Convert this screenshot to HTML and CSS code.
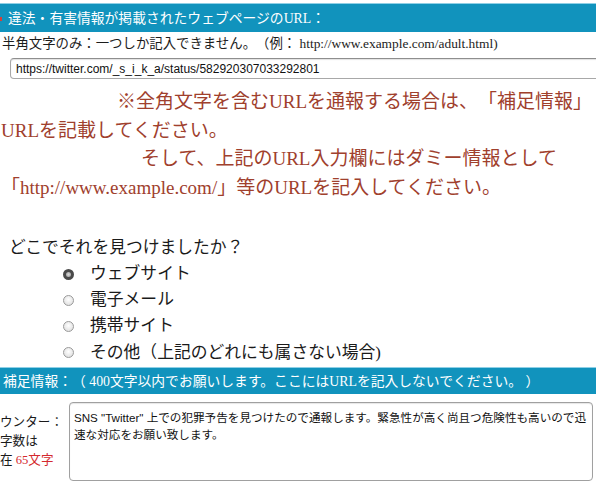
FILE: index.html
```html
<!DOCTYPE html>
<html lang="ja">
<head>
<meta charset="utf-8">
<title>通報フォーム</title>
<link rel="stylesheet" href="styles.css">
</head>
<body>
<div class="page">
  <div class="bar bar-top"><span class="mark"></span>違法・有害情報が掲載されたウェブページのURL：</div>
  <div class="hint">半角文字のみ：一つしか記入できません。（例： http://www.example.com/adult.html)</div>
  <div class="url-row"><input class="url" type="text" value="https://twitter.com/_s_i_k_a/status/582920307033292801"></div>
  <div class="notice">
    <p class="indent1">※全角文字を含むURLを通報する場合は、「補足情報」</p>
    <p>URLを記載してください。</p>
    <p class="indent2">そして、上記のURL入力欄にはダミー情報として</p>
    <p>「http://www.example.com/」等のURLを記入してください。</p>
  </div>
  <div class="question">どこでそれを見つけましたか？</div>
  <ul class="choices">
    <li><span class="radio checked"></span>ウェブサイト</li>
    <li><span class="radio"></span>電子メール</li>
    <li><span class="radio"></span>携帯サイト</li>
    <li><span class="radio"></span>その他（上記のどれにも属さない場合)</li>
  </ul>
  <div class="bar bar-extra">補足情報：（ 400文字以内でお願いします。ここにはURLを記入しないでください。 ）</div>
  <div class="extra-row">
    <div class="counter">
      <div>ウンター：</div>
      <div>字数は</div>
      <div>在 <span class="count">65文字</span></div>
    </div>
    <textarea class="memo">SNS "Twitter" 上での犯罪予告を見つけたので通報します。緊急性が高く尚且つ危険性も高いので迅
速な対応をお願い致します。</textarea>
  </div>
</div>
</body>
</html>
```

FILE: styles.css
```css
html, body {
  margin: 0;
  padding: 0;
  background: #ffffff;
}

.page {
  width: 596px;
  height: 483px;
  overflow: hidden;
  font-family: "Liberation Serif", "Noto Sans CJK JP", serif;
  color: #1c1c1c;
  text-spacing-trim: space-all;
}

.bar {
  box-sizing: border-box;
  background: #1193bd;
  color: #ffffff;
  font-size: 13.8px;
  border-top: 1px solid #8fd0e6;
  white-space: nowrap;
}

.bar-top {
  margin-top: 3px;
  height: 29px;
  line-height: 30px;
  padding-left: 8px;
  position: relative;
}

.mark {
  position: absolute;
  left: 0;
  top: 13px;
  width: 2px;
  height: 4px;
  background: #d4403a;
}

.hint {
  height: 26px;
  line-height: 24px;
  font-size: 13.4px;
  padding-left: 2px;
  white-space: nowrap;
}

.url-row {
  height: 22px;
}

.url {
  box-sizing: border-box;
  margin: 0 0 0 10px;
  width: 600px;
  height: 21px;
  padding: 0 5px;
  border: 1px solid #a8a8a8;
  border-top-color: #8e8e8e;
  border-radius: 4px;
  box-shadow: inset 0 1px 1px rgba(0, 0, 0, 0.12);
  font-family: "Liberation Sans", "Noto Sans CJK JP", sans-serif;
  font-size: 12px;
  color: #111111;
  background: #ffffff;
  outline: none;
}

.notice {
  margin-top: 8px;
  padding-left: 1px;
  font-size: 19px;
  line-height: 28.5px;
  color: #a0402d;
  white-space: nowrap;
}

.notice p {
  margin: 0;
}

.indent1 {
  padding-left: 116px;
}

.indent2 {
  padding-left: 140px;
}

.question {
  margin-top: 33px;
  height: 26px;
  line-height: 26px;
  font-size: 16.8px;
  padding-left: 9px;
  color: #1a1a1a;
}

.choices {
  list-style: none;
  margin: 0;
  padding: 0 0 0 63px;
  font-size: 16.8px;
  line-height: 26.2px;
  color: #1a1a1a;
}

.choices li {
  display: flex;
  align-items: center;
  white-space: nowrap;
}

.radio {
  box-sizing: border-box;
  width: 11px;
  height: 11px;
  border-radius: 50%;
  border: 1px solid #9a9a9a;
  background: radial-gradient(circle at 50% 40%, #ffffff 0%, #e4e4e4 70%, #cfcfcf 100%);
  margin-right: 16px;
}

.radio.checked {
  border: 3px solid #4a4a4a;
  background: radial-gradient(circle, #d8d8d8 0%, #9a9a9a 100%);
}

.bar-extra {
  margin-top: 1px;
  height: 27px;
  line-height: 27px;
  padding-left: 3px;
}

.extra-row {
  display: flex;
  margin-top: 8px;
}

.counter {
  width: 69px;
  padding-top: 11px;
  font-size: 12.6px;
  line-height: 19px;
  white-space: nowrap;
  color: #1a1a1a;
}

.count {
  color: #d42a2f;
}

.memo {
  box-sizing: border-box;
  width: 524px;
  height: 79px;
  margin: 0;
  padding: 6px 4px;
  border: 1px solid #a0a0a0;
  border-radius: 4px;
  box-shadow: inset 0 1px 1px rgba(0, 0, 0, 0.1);
  font-family: "Liberation Sans", "Noto Sans CJK JP", sans-serif;
  font-size: 11.6px;
  line-height: 17px;
  color: #111111;
  resize: none;
  overflow: hidden;
  white-space: pre;
  outline: none;
}
```
